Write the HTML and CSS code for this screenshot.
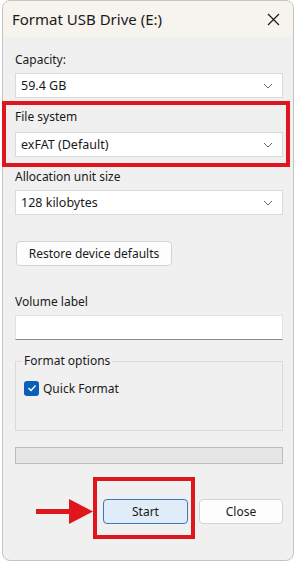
FILE: index.html
```html
<!DOCTYPE html>
<html lang="en">
<head>
    <meta charset="UTF-8">
    <meta name="viewport" content="width=device-width, initial-scale=1.0">
    <title>Format USB Drive (E:)</title>
    <link rel="stylesheet" href="styles.css">
</head>
<body>
    <div class="window">
        <div class="titlebar">
            <span class="title">Format USB Drive (E:)</span>
            <svg class="close-x" width="13" height="13" viewBox="0 0 13 13">
                <path d="M1 1 L12 12 M12 1 L1 12" stroke="#1a1a1a" stroke-width="1.2" fill="none"/>
            </svg>
        </div>

        <div class="content">
            <div class="label label-first">Capacity:</div>
            <div class="select">
                <span>59.4 GB</span>
                <svg class="chevron" width="10" height="6" viewBox="0 0 10 6"><path d="M1 1 L5 5 L9 1" stroke="#666" stroke-width="1" fill="none"/></svg>
            </div>

            <div class="label label-fs">File system</div>
            <div class="select">
                <span>exFAT (Default)</span>
                <svg class="chevron" width="10" height="6" viewBox="0 0 10 6"><path d="M1 1 L5 5 L9 1" stroke="#666" stroke-width="1" fill="none"/></svg>
            </div>

            <div class="label label-alloc">Allocation unit size</div>
            <div class="select">
                <span>128 kilobytes</span>
                <svg class="chevron" width="10" height="6" viewBox="0 0 10 6"><path d="M1 1 L5 5 L9 1" stroke="#666" stroke-width="1" fill="none"/></svg>
            </div>

            <button class="btn btn-restore">Restore device defaults</button>

            <div class="label label-volume">Volume label</div>
            <div class="textbox"></div>

            <fieldset class="options">
                <legend>Format options</legend>
                <div class="check-row">
                    <span class="checkbox">
                        <svg width="10" height="8" viewBox="0 0 10 8"><path d="M1.5 4 L4 6.5 L8.5 1.5" stroke="#fff" stroke-width="1.3" fill="none"/></svg>
                    </span>
                    <span>Quick Format</span>
                </div>
            </fieldset>

            <div class="progress"></div>

            <div class="actions">
                <button class="btn btn-start">Start</button>
                <button class="btn btn-close">Close</button>
            </div>
        </div>
    </div>

    <!-- annotations drawn over the screenshot -->
    <div class="highlight highlight-fs"></div>
    <div class="highlight highlight-start"></div>
    <svg class="arrow" width="58" height="28" viewBox="0 0 58 28">
        <rect x="0" y="11" width="36" height="5" fill="#e0161e"/>
        <polygon points="33,1 57,13.5 33,26" fill="#e0161e"/>
    </svg>
</body>
</html>
```

FILE: styles.css
```css
* {
    margin: 0;
    padding: 0;
    box-sizing: border-box;
}

body {
    position: relative;
    background: #ffffff;
    font-family: 'Noto Sans', 'Liberation Sans', sans-serif;
    font-size: 12px;
    color: #1a1a1a;
    width: 295px;
    height: 562px;
    overflow: hidden;
}

.window {
    margin-left: 2px;
    width: 292px;
    height: 561px;
    border: 1px solid #c4c4c4;
    border-radius: 8px;
    background: #f0f0f0;
    overflow: hidden;
}

.titlebar {
    height: 36px;
    background: #f7f3ee;
    display: flex;
    align-items: center;
    justify-content: space-between;
    padding: 0 13px 0 9px;
}

.title {
    font-size: 15px;
    color: #1a1a1a;
}

.content {
    padding: 0 10px 0 12px;
}

.label {
    height: 16px;
    line-height: 16px;
    margin-bottom: 5px;
}

.label-first { margin-top: 15px; }
.label-fs { margin-top: 11px; margin-bottom: 7px; }
.label-alloc { margin-top: 12px; }
.label-volume { margin-top: 28px; }

.select {
    height: 25px;
    background: #ffffff;
    border: 1px solid #dadada;
    display: flex;
    align-items: center;
    justify-content: space-between;
    padding: 0 9px 0 5px;
    font-size: 12.5px;
}

.chevron {
    margin-top: 1px;
}

.btn {
    font-family: inherit;
    font-size: 12px;
    color: #1a1a1a;
    background: #fdfdfd;
    border: 1px solid #d3d3d3;
    border-radius: 4px;
    height: 25px;
    cursor: pointer;
}

.btn-restore {
    margin-top: 26px;
    margin-left: 1px;
    width: 156px;
}

.textbox {
    height: 25px;
    background: #ffffff;
    border: 1px solid #e2e2e2;
    border-bottom: 1px solid #8a8a8a;
}

.options {
    margin-top: 13px;
    border: 1px solid #dadada;
    padding: 11px 8px 34px 8px;
}

.options legend {
    line-height: 16px;
    padding: 0 2px;
    margin-left: -2px;
}

.check-row {
    display: flex;
    align-items: center;
    gap: 4px;
    height: 16px;
}

.checkbox {
    width: 15px;
    height: 15px;
    border-radius: 3px;
    background: #0b5fb8;
    display: flex;
    align-items: center;
    justify-content: center;
}

.progress {
    margin-top: 16px;
    height: 17px;
    background: #e6e6e6;
    border: 1px solid #bcbcbc;
}

.actions {
    margin-top: 35px;
    display: flex;
    justify-content: flex-end;
    gap: 11px;
}

.btn-start {
    width: 85px;
    background: #e0ecf8;
    border: 1px solid #3a78bd;
}

.btn-close {
    width: 84px;
}

/* red annotation marks */
.highlight {
    position: absolute;
    border: 4px solid #e0161e;
}

.highlight-fs {
    left: 2px;
    top: 101px;
    width: 288px;
    height: 66px;
}

.highlight-start {
    left: 93px;
    top: 477px;
    width: 102px;
    height: 62px;
}

.arrow {
    position: absolute;
    left: 36px;
    top: 498px;
}
```
